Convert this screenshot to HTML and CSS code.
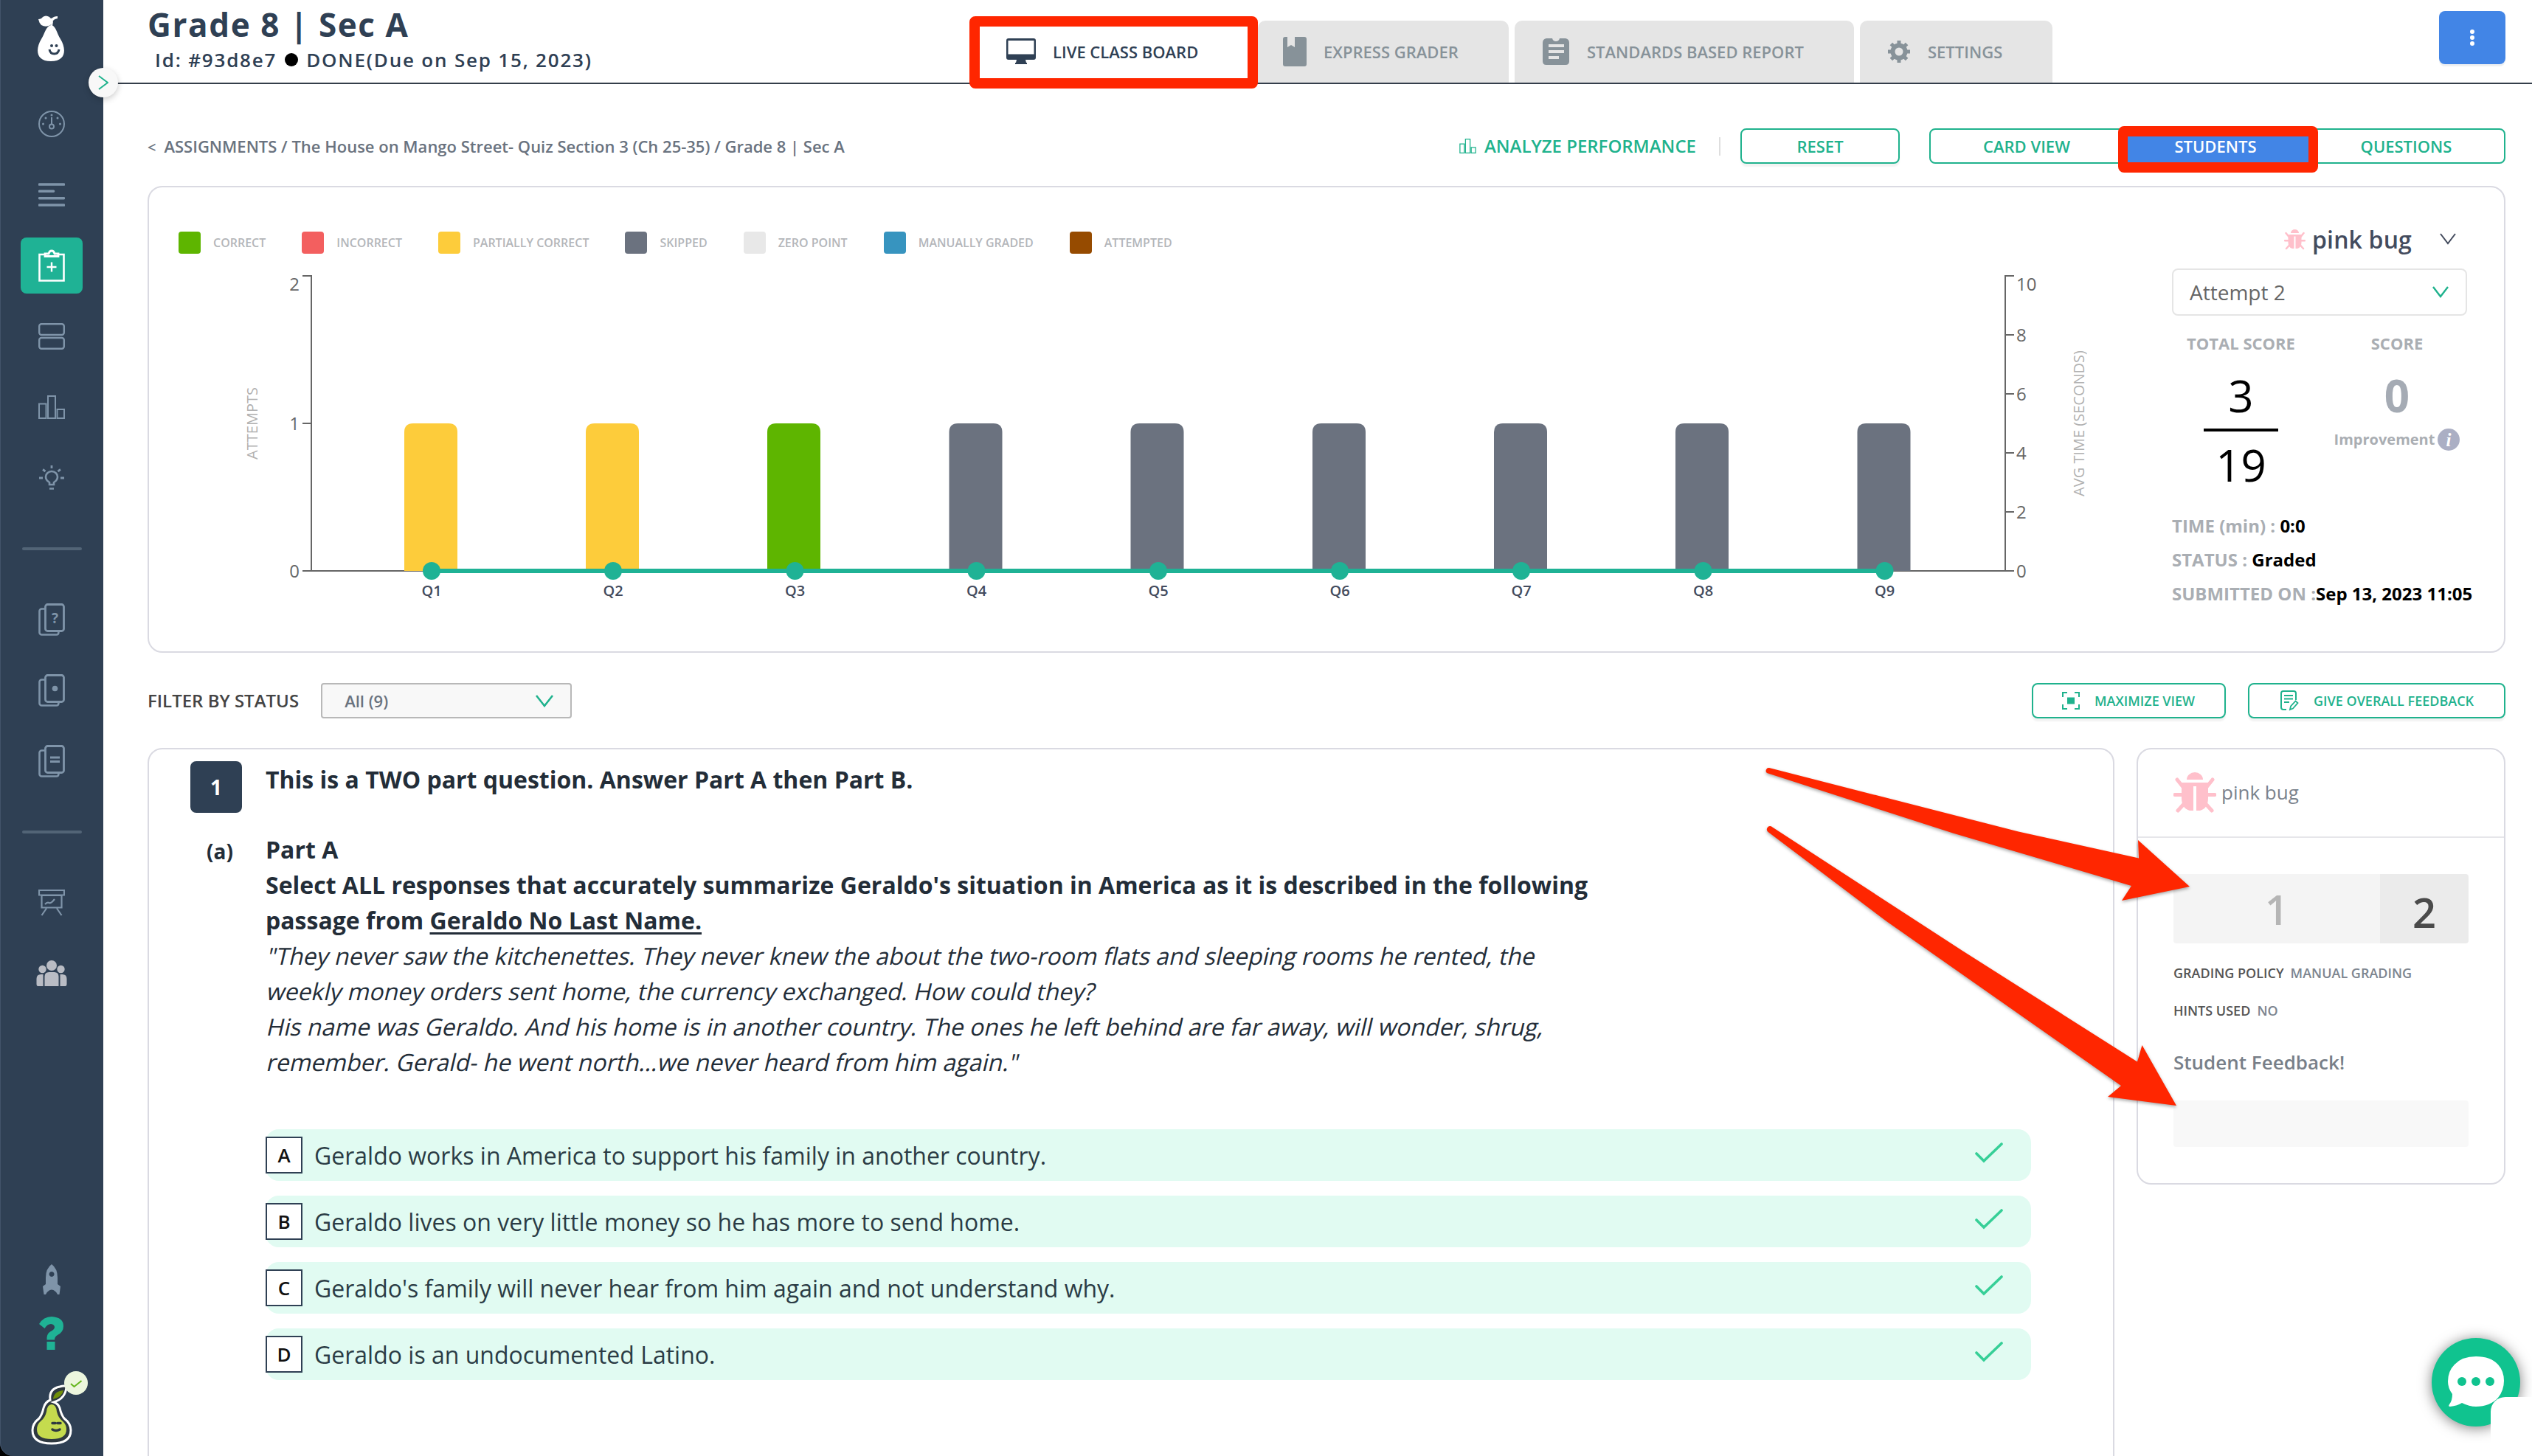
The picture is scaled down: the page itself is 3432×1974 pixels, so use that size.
FILE: index.html
```html
<!DOCTYPE html>
<html lang="en">
<head>
<meta charset="utf-8">
<title>Grade 8 | Sec A</title>
<link rel="stylesheet" href="styles.css">
</head>
<body>
<svg class="defs" width="0" height="0">
  <symbol id="bug" viewBox="0 0 58 56">
    <path d="M18 11a11 10 0 0 1 22 0z" fill="#ffc0cb"/>
    <path d="M11 15h36v21q0 14-11 17h-14q-11-3-11-17z" fill="#ffc0cb"/>
    <path d="M5 11l8 10M53 11l-8 10M2 31.500h12M44 31.500h12M6 53l9-10M52 53l-9-10" stroke="#ffc0cb" stroke-width="5" stroke-linecap="round"/>
    <path d="M29 20v33" stroke="#fff" stroke-width="4"/>
  </symbol>
  <symbol id="bars" viewBox="0 0 36 32">
    <path d="M1 11.500h9.500V31H1zM13 1h10v30H13zM25.500 19H35v12h-9.500z" fill="none" stroke="currentColor" stroke-width="2"/>
  </symbol>
  <symbol id="pages" viewBox="0 0 36 44">
    <path d="M9 7.500H4.500a3 3 0 0 0-3 3v29a3 3 0 0 0 3 3h20q3 0 3-4" fill="none" stroke="currentColor" stroke-width="2.600"/>
    <rect x="9.500" y="1.500" width="25" height="36" rx="3" fill="none" stroke="currentColor" stroke-width="2.800"/>
  </symbol>
</svg>

<aside class="sidebar">
  <div class="logo">
    <svg width="40" height="64" viewBox="0 0 40 64">
      <path d="M20 13C13 15 12 24 7 32-1 45-1 62 20 62s21-17 13-30C28 24 27 15 21 13z" fill="#fff"/>
      <path d="M3 5q4 0 6-3 4-3 9 0 1 2 3 2 3-3 8-3v3q-6 1-7 5-1 4-5 5-5 2-10-1Q4 10 3 5z" fill="#fff"/>
      <path d="M21 14l1-6" stroke="#fff" stroke-width="2"/>
      <circle cx="21" cy="41" r="2" fill="#2f4054"/><circle cx="27.500" cy="41" r="2" fill="#2f4054"/>
      <path d="M18 46q1 6 6.500 6t6.500-6" fill="none" stroke="#2f4054" stroke-width="3"/>
    </svg>
  </div>
  <nav class="nav">
    <a class="slot"><svg width="36" height="36" viewBox="0 0 36 36"><circle cx="18" cy="18" r="17" fill="none" stroke="currentColor" stroke-width="2"/><path d="M18 9v9" stroke="currentColor" stroke-width="2"/><circle cx="18" cy="21.500" r="3" fill="none" stroke="currentColor" stroke-width="2"/><g fill="currentColor"><circle cx="18" cy="6" r="1.500"/><circle cx="10" cy="10" r="1.500"/><circle cx="26" cy="10" r="1.500"/><circle cx="6.500" cy="18" r="1.500"/><circle cx="29.500" cy="18" r="1.500"/></g></svg></a>
    <a class="slot"><svg width="36" height="32" viewBox="0 0 36 32"><path d="M1.500 2h33M1.500 11.300h19M1.500 20.700h33M1.500 30h33" stroke="currentColor" stroke-width="3.600" stroke-linecap="round"/></svg></a>
    <a class="slot"><span class="tile"><svg width="36" height="44" viewBox="0 0 36 44"><path d="M8.500 7H1.500v35.500h33V7h-7" fill="none" stroke="#fff" stroke-width="2.600"/><path d="M9 9.500V6h5q1-4 4-4t4 4h5v3.500z" fill="none" stroke="#fff" stroke-width="2.800"/><path d="M18 17.500v13M11.500 24h13" stroke="#fff" stroke-width="2.400"/></svg></span></a>
    <a class="slot"><svg width="36" height="36" viewBox="0 0 36 36"><rect x="1.200" y="1.200" width="33.600" height="14.800" rx="3" fill="none" stroke="currentColor" stroke-width="2.400"/><rect x="1.200" y="20" width="33.600" height="14.800" rx="3" fill="none" stroke="currentColor" stroke-width="2.400"/></svg></a>
    <a class="slot"><svg width="36" height="32"><use href="#bars"/></svg></a>
    <a class="slot"><svg width="34" height="34" viewBox="0 0 34 34"><path d="M14 26v-3q-5-3-5-7.500a8 7.500 0 0 1 16 0q0 4.500-5 7.500v3zM14 31.500h6" fill="none" stroke="currentColor" stroke-width="2.600"/><path d="M17 0v4M5 5.500l3.500 2.500M29 5.500L25.500 8M0 17h5M29 17h5" stroke="currentColor" stroke-width="2.800"/></svg></a>
    <div class="slot"><i class="rule"></i></div>
    <a class="slot"><svg width="36" height="44" viewBox="0 0 36 44"><use href="#pages"/><text x="22.500" y="27" class="page-mark">?</text></svg></a>
    <a class="slot"><svg width="36" height="44" viewBox="0 0 36 44"><use href="#pages"/><circle cx="22.500" cy="19.500" r="3.800" fill="currentColor"/></svg></a>
    <a class="slot"><svg width="36" height="44" viewBox="0 0 36 44"><use href="#pages"/><path d="M16 17h13M16 22.500h13" stroke="currentColor" stroke-width="2.800"/></svg></a>
    <div class="slot"><i class="rule"></i></div>
    <a class="slot"><svg width="36" height="36" viewBox="0 0 36 36"><path d="M1 1h34v6.500H1zM4.500 8h27v16.500h-27zM11 25.500L4.500 35M25 25.500l6.500 9.500M9 20q3-3.500 5.500-2t7.500-5" fill="none" stroke="currentColor" stroke-width="2.200"/></svg></a>
    <a class="slot"><svg width="42" height="36" viewBox="0 0 42 36"><g fill="#b9bcc4"><circle cx="21" cy="7" r="7"/><circle cx="8.500" cy="12" r="5.200"/><circle cx="33.500" cy="12" r="5.200"/><path d="M11.500 35V22q0-6 6-6h7q6 0 6 6v13zM9.500 35H2.500Q.5 35 .5 32v-7q0-6 6-6h3zM32.500 35h7q2 0 2-3v-7q0-6-6-6h-3z"/></g></svg></a>
  </nav>
  <div class="sidebar-foot">
    <svg class="rocket" width="24" height="42" viewBox="0 0 24 42"><path fill-rule="evenodd" d="M12 0q8 6 8 18v9l4 3-1.500 11H20q-3-6-8-6.500Q7 35 4 41H1.500L0 30l4-3v-9Q4 6 12 0zm0 10a3.500 3.500 0 1 0 .1 0z" fill="#7f94a9"/></svg>
    <svg width="34" height="46" viewBox="0 0 34 46"><path d="M0 10Q6 0 17 0q16 1 16 13 0 8-8 12-4 2-4 6.500H10.500q-.5-8 4.500-11 6-3 6-6 0-4-5-4.500-5 0-8.500 6zM10.500 34H21.500v11H10.500z" fill="#1fb295"/></svg>
    <svg class="pear" width="76" height="102" viewBox="0 0 76 102">
      <path d="M40 39Q38 24 53 21q7-2 9 0-1 16-17 21 6 2 8 8 2 9 6 14 9 7 9 16 0 18-26 18T16 80q0-9 9-16 4-5 6-14 2-8 9-11z" fill="#2f3940" stroke="#fff" stroke-width="3"/>
      <path d="M42 45q6 0 7 10 2 8 7 12 6 5 6 12 0 13-20 13T22 79q0-7 6-12 5-4 7-12 1-10 7-10z" fill="#c5db4e"/>
      <path d="M44 38q1-11 14-12-2 9-14 12z" fill="#71900a"/>
      <path d="M43 70.500h4M50 70.500h4M43 79q5 3 10 0" stroke="#2f3940" stroke-width="3.500" fill="none" stroke-linecap="round"/>
      <circle cx="75" cy="16" r="16" fill="#ecf6de"/>
      <path d="M68 17l4.500 4 10-8" fill="none" stroke="#63b51a" stroke-width="2"/>
    </svg>
  </div>
  <button class="toggle"><svg width="14" height="20" viewBox="0 0 14 20"><path d="M1 1l12 9L1 19" fill="none" stroke="#1fb28d" stroke-width="2"/></svg></button>
</aside>

<main class="main">
  <header class="header">
    <div class="heading">
      <h1>Grade 8 | Sec A</h1>
      <p>Id: #93d8e7 <i class="dot"></i> DONE(Due on Sep 15, 2023)</p>
    </div>
    <div class="tabs">
      <a class="tab tab-live"><svg width="40" height="36" viewBox="0 0 40 36"><path fill-rule="evenodd" d="M3 0h34q3 0 3 3v23q0 3-3 3H26l1 4h1v2H12v-2h1l1-4H3q-3 0-3-3V3q0-3 3-3zM2.500 3v18.500h35V3z" fill="#2f4054"/></svg>LIVE CLASS BOARD</a>
      <a class="tab tab-express"><svg width="32" height="40" viewBox="0 0 32 40"><path d="M3 0h3v14l5-3 5 3V0h13q3 0 3 3v34q0 3-3 3H3q-3 0-3-3V3q0-3 3-3z" fill="#879299"/></svg>EXPRESS GRADER</a>
      <a class="tab tab-report"><svg width="36" height="36" viewBox="0 0 36 36"><path fill-rule="evenodd" d="M5 0h8q1 4 5 4t5-4h8q5 1 5 6v25q0 5-5 5H5q-5 0-5-5V6q0-5 5-6zM8 8v4h21V8zM8 16v4h21v-4zM8 24v4h14v-4z" fill="#879299"/></svg>STANDARDS BASED REPORT</a>
      <a class="tab tab-settings"><svg width="30" height="30" viewBox="0 0 30 30"><circle cx="15" cy="15" r="8.500" fill="none" stroke="#879299" stroke-width="6"/><path d="M15 0v5M15 25v5M0 15h5M25 15h5M4.400 4.400l3.500 3.500M22.100 22.100l3.500 3.500M4.400 25.600l3.500-3.500M22.100 7.900l3.500-3.500" stroke="#879299" stroke-width="5"/></svg>SETTINGS</a>
    </div>
    <button class="more"><svg width="8" height="24" viewBox="0 0 8 24"><g fill="#fff"><circle cx="4" cy="4" r="3"/><circle cx="4" cy="12" r="3"/><circle cx="4" cy="20" r="3"/></g></svg></button>
  </header>

  <div class="toolbar">
    <div class="crumbs"><span class="back">&lt;</span>ASSIGNMENTS / The House on Mango Street- Quiz Section 3 (Ch 25-35) / Grade 8 | Sec A</div>
    <a class="analyze"><svg width="23" height="20" preserveAspectRatio="none"><use href="#bars" width="23" height="20"/></svg>ANALYZE PERFORMANCE</a>
    <i class="vline"></i>
    <button class="btn reset">RESET</button>
    <div class="switch">
      <span class="seg seg-card">CARD VIEW</span><span class="seg seg-students">STUDENTS</span><span class="seg seg-questions">QUESTIONS</span>
    </div>
  </div>

  <section class="card overview">
    <div class="chart">
      <ul class="legend">
        <li><i class="sw green"></i>CORRECT</li>
        <li><i class="sw red"></i>INCORRECT</li>
        <li><i class="sw yellow"></i>PARTIALLY CORRECT</li>
        <li><i class="sw gray"></i>SKIPPED</li>
        <li><i class="sw light"></i>ZERO POINT</li>
        <li><i class="sw blue"></i>MANUALLY GRADED</li>
        <li><i class="sw brown"></i>ATTEMPTED</li>
      </ul>
      <svg class="plot" width="2598" height="500" viewBox="242 360 2598 500">
        <g class="axis">
          <path d="M410 374h12v400h-12M410 574h12M422 774H2718M2730 374h-12v400h12M2718 454h12M2718 534h12M2718 614h12M2718 694h12"/>
        </g>
        <g class="bars">
          <path fill="#fdcc3b" d="M548 774V586q0-12 12-12h48q12 0 12 12v188z"/>
          <path fill="#fdcc3b" d="M794 774V586q0-12 12-12h48q12 0 12 12v188z"/>
          <path fill="#5eb500" d="M1040 774V586q0-12 12-12h48q12 0 12 12v188z"/>
          <path fill="#6b727f" d="M1286.500 774V586q0-12 12-12h48q12 0 12 12v188z"/>
          <path fill="#6b727f" d="M1532.500 774V586q0-12 12-12h48q12 0 12 12v188z"/>
          <path fill="#6b727f" d="M1779 774V586q0-12 12-12h48q12 0 12 12v188z"/>
          <path fill="#6b727f" d="M2025 774V586q0-12 12-12h48q12 0 12 12v188z"/>
          <path fill="#6b727f" d="M2271 774V586q0-12 12-12h48q12 0 12 12v188z"/>
          <path fill="#6b727f" d="M2517.500 774V586q0-12 12-12h48q12 0 12 12v188z"/>
        </g>
        <path d="M585 774H2554" stroke="#1fb295" stroke-width="6"/>
        <g fill="#1fb295"><circle cx="585" cy="774" r="12"/><circle cx="831" cy="774" r="12"/><circle cx="1077.500" cy="774" r="12"/><circle cx="1323.500" cy="774" r="12"/><circle cx="1570" cy="774" r="12"/><circle cx="1816" cy="774" r="12"/><circle cx="2062" cy="774" r="12"/><circle cx="2308.500" cy="774" r="12"/><circle cx="2554.500" cy="774" r="12"/></g>
        <g class="tick end"><text x="406" y="394">2</text><text x="406" y="583">1</text><text x="406" y="783">0</text></g>
        <g class="tick"><text x="2733" y="394">10</text><text x="2733" y="463">8</text><text x="2733" y="543">6</text><text x="2733" y="623">4</text><text x="2733" y="703">2</text><text x="2733" y="783">0</text></g>
        <g class="qlabel"><text x="585" y="808">Q1</text><text x="831" y="808">Q2</text><text x="1077.500" y="808">Q3</text><text x="1323.500" y="808">Q4</text><text x="1570" y="808">Q5</text><text x="1816" y="808">Q6</text><text x="2062" y="808">Q7</text><text x="2308.500" y="808">Q8</text><text x="2554.500" y="808">Q9</text></g>
        <g class="axis-title"><text transform="translate(349 574) rotate(-90)">ATTEMPTS</text><text transform="translate(2825 574) rotate(-90)">AVG TIME (SECONDS)</text></g>
      </svg>
    </div>
    <div class="summary">
      <div class="student-pick"><svg width="29" height="29"><use href="#bug"/></svg><span>pink bug</span><svg class="pick-chev" width="22" height="16" viewBox="0 0 22 16"><path d="M1 1l10 13L21 1" fill="none" stroke="#434b5d" stroke-width="2"/></svg></div>
      <div class="attempt">Attempt 2<svg width="22" height="16" viewBox="0 0 22 16"><path d="M1 1l10 13L21 1" fill="none" stroke="#1fb28d" stroke-width="2.400"/></svg></div>
      <div class="scores">
        <div class="score-col"><span class="score-label">TOTAL SCORE</span><span class="num">3</span><i class="bar"></i><span class="num">19</span></div>
        <div class="score-col"><span class="score-label">SCORE</span><span class="num muted">0</span><span class="improve">Improvement<svg width="30" height="30" viewBox="0 0 30 30"><circle cx="15" cy="15" r="15" fill="#abafc4"/><text x="15" y="23.500" class="info-i">i</text></svg></span></div>
      </div>
      <p class="fact">TIME (min) : <b>0:0</b></p>
      <p class="fact">STATUS : <b>Graded</b></p>
      <p class="fact">SUBMITTED ON :<b>Sep 13, 2023 11:05</b></p>
    </div>
  </section>

  <div class="filters">
    <span class="filter-label">FILTER BY STATUS</span>
    <div class="filter-select">All (9)<svg width="24" height="17" viewBox="0 0 24 17"><path d="M1 1l11 14L23 1" fill="none" stroke="#1fb28d" stroke-width="2.600"/></svg></div>
    <button class="btn small maximize"><svg width="24" height="24" viewBox="0 0 24 24"><path d="M1 7V1h6M17 1h6v6M23 17v6h-6M7 23H1v-6" fill="none" stroke="#1fb28d" stroke-width="2"/><path d="M7 7.500h10v9H7z" fill="#1fb28d"/></svg>MAXIMIZE VIEW</button>
    <button class="btn small feedback-btn"><svg width="25" height="28" viewBox="0 0 25 28"><path d="M8 26H4q-3 0-3-3V4q0-3 3-3h14q3 0 3 3v9M5 7h12M5 11.500h12M5 16h7" fill="none" stroke="#1fb28d" stroke-width="2"/><path d="M13 26l1-4.500 6.500-7 3 2.500-6.500 7.500z" fill="none" stroke="#1fb28d" stroke-width="1.800"/></svg>GIVE OVERALL FEEDBACK</button>
  </div>

  <div class="work">
    <section class="card question">
      <div class="qrow"><span class="qnum">1</span><p class="qtext"><b>This is a TWO part question. Answer Part A then Part B.</b></p></div>
      <div class="qrow part"><span class="qpart">(a)</span>
        <div class="qtext">
          <b>Part A<br>Select ALL responses that accurately summarize Geraldo's situation in America as it is described in the following<br>passage from <u>Geraldo No Last Name.</u></b>
          <p class="slant">"They never saw the kitchenettes. They never knew the about the two-room flats and sleeping rooms he rented, the</p>
          <p class="slant">weekly money orders sent home, the currency exchanged. How could they?</p>
          <p class="slant">His name was Geraldo. And his home is in another country. The ones he left behind are far away, will wonder, shrug,</p>
          <p class="slant">remember. Gerald- he went north…we never heard from him again."</p>
        </div>
      </div>
      <ul class="options">
        <li><span class="key">A</span><span>Geraldo works in America to support his family in another country.</span><svg class="check" width="38" height="28" viewBox="0 0 38 28"><path d="M2 15l10 10L36 2" fill="none" stroke="#36cf97" stroke-width="3.600" stroke-linecap="round"/></svg></li>
        <li><span class="key">B</span><span>Geraldo lives on very little money so he has more to send home.</span><svg class="check" width="38" height="28" viewBox="0 0 38 28"><path d="M2 15l10 10L36 2" fill="none" stroke="#36cf97" stroke-width="3.600" stroke-linecap="round"/></svg></li>
        <li><span class="key">C</span><span>Geraldo's family will never hear from him again and not understand why.</span><svg class="check" width="38" height="28" viewBox="0 0 38 28"><path d="M2 15l10 10L36 2" fill="none" stroke="#36cf97" stroke-width="3.600" stroke-linecap="round"/></svg></li>
        <li><span class="key">D</span><span>Geraldo is an undocumented Latino.</span><svg class="check" width="38" height="28" viewBox="0 0 38 28"><path d="M2 15l10 10L36 2" fill="none" stroke="#36cf97" stroke-width="3.600" stroke-linecap="round"/></svg></li>
      </ul>
    </section>
    <section class="card grading">
      <div class="grading-head"><svg width="58" height="56"><use href="#bug"/></svg>pink bug</div>
      <div class="grading-body">
        <div class="points"><span class="got">1</span><span class="max">2</span></div>
        <p class="meta">GRADING POLICY<span>MANUAL GRADING</span></p>
        <p class="meta">HINTS USED<span>NO</span></p>
        <h2>Student Feedback!</h2>
        <div class="feedback-input"></div>
      </div>
    </section>
  </div>
</main>

<div class="mark mark-tab"></div>
<div class="mark mark-students"></div>
<svg class="arrows" width="3432" height="1974" viewBox="0 0 3432 1974">
  <path d="M2398 1041L2736 1127.500 2899 1163.500 2898 1139 2968 1202 2876 1221 2889 1201 2647 1129.500 2395 1048A4 4 0 0 1 2398 1041z"/>
  <path d="M2402.500 1121.500L2660 1289 2897 1439.500 2903.500 1417 2950 1499 2857 1487 2875 1472 2557 1249 2396 1127.500A4 4 0 0 1 2402.500 1121.500z"/>
</svg>
<div class="chat"><svg width="76" height="70" viewBox="0 0 76 70"><path d="M38 0q20 0 30 11 8 9 8 22t-8 23q-11 12-30 12-9 0-19-5-6 4-16 5-3 0-1-3 4-5 4-14Q0 43 0 34 0 20 9 11 19 0 38 0z" fill="#fff"/><g fill="#10c38f"><circle cx="19" cy="34" r="6"/><circle cx="38" cy="34" r="6"/><circle cx="57" cy="34" r="6"/></g></svg></div>
<div class="corner"></div>
</body>
</html>
```
FILE: styles.css
```css
* { box-sizing: border-box; margin: 0; padding: 0; }
html, body { width: 3432px; height: 1974px; overflow: hidden; }
body { position: relative; display: flex; background: #000; font-family: "Open Sans", sans-serif; font-size: 22px; color: #2f4054; }
svg { display: block; flex: none; }
ul { list-style: none; }
i { font-style: normal; }
b { font-weight: 700; }
button { font: inherit; background: none; border: 0; }
.defs { position: absolute; }

/* sidebar */
.sidebar { position: relative; flex: none; width: 140px; height: 1974px; display: flex; flex-direction: column; background: #2f4054; box-shadow: inset 1px 0 #43546a; border-bottom-left-radius: 18px; color: #7f94a9; }
.logo { height: 120px; padding: 21px 0 0 49px; }
.slot { height: 96px; display: flex; align-items: center; justify-content: center; }
.tile { width: 84px; height: 76px; display: flex; align-items: center; justify-content: center; border-radius: 8px; background: #1fb295; }
.rule { width: 81px; height: 4px; border-radius: 2px; background: #526476; }
.page-mark { font-size: 19px; font-weight: 700; text-anchor: middle; fill: currentColor; }
.sidebar-foot { margin-top: auto; height: 260px; display: flex; flex-direction: column; align-items: center; }
.sidebar-foot .rocket { margin-bottom: 29px; }
.pear { overflow: visible; margin-top: 28px; margin-right: 8px; }
.toggle { position: absolute; left: 120px; top: 92px; width: 40px; height: 40px; display: flex; align-items: center; justify-content: center; border-radius: 50%; background: #f8f8f8; box-shadow: 0 3px 8px rgba(0,0,0,.2); z-index: 2; }

/* main */
.main { flex: none; width: 3292px; display: flex; flex-direction: column; background: #fff; }
.header { flex: none; height: 114px; display: flex; align-items: flex-end; border-bottom: 2px solid #343e4a; padding: 0 36px 0 60px; }
.heading { width: 1113px; align-self: flex-start; color: #2f4054; letter-spacing: 1.6px; }
.heading h1 { font-size: 44px; font-weight: 700; line-height: 60px; margin-top: 3px; }
.heading p { display: flex; align-items: center; gap: 11px; padding-left: 10px; font-size: 26px; font-weight: 600; line-height: 36px; letter-spacing: 1.8px; }
.dot { width: 18px; height: 18px; border-radius: 50%; background: #000; }
.tabs { flex: 1; display: flex; gap: 8px; }
.tab { height: 84px; display: flex; align-items: center; border-radius: 10px 10px 0 0; background: #e5e5e5; color: #879299; font-weight: 600; line-height: 30px; }
.tab-live { width: 384px; padding-left: 51px; gap: 23px; background: #fff; color: #2f4054; }
.tab-express { width: 340px; padding-left: 34px; gap: 23px; }
.tab-report { width: 460px; padding-left: 38px; gap: 24px; }
.tab-settings { width: 261px; padding-left: 38px; gap: 24px; }
.more { align-self: flex-start; margin-top: 15px; width: 90px; height: 72px; border-radius: 8px; background: #4285e6; box-shadow: 0 3px 1px #eef0f2; display: flex; align-items: center; justify-content: center; }

.toolbar { flex: none; height: 138px; padding: 60px 36px 30px 60px; display: flex; align-items: center; font-weight: 600; line-height: 30px; }
.crumbs { flex: 1; padding-top: 2px; color: #6a737f; }
.back { margin-right: 11px; font-size: 20px; }
.analyze { display: flex; align-items: center; gap: 11px; font-size: 24px; color: #1fb28d; }
.vline { width: 2px; height: 25px; margin: 0 27px 0 31px; background: #dedede; }
.btn { height: 48px; display: flex; align-items: center; justify-content: center; border: 2px solid #1fb28d; border-radius: 8px; color: #1fb28d; font-weight: 600; box-shadow: 0 4px 2px #f3f3f3; }
.reset { width: 216px; margin-right: 40px; }
.switch { width: 781px; height: 48px; display: flex; border: 2px solid #1fb28d; border-radius: 8px; overflow: hidden; color: #1fb28d; }
.seg { display: flex; align-items: center; justify-content: center; }
.seg-card { width: 260px; }
.seg-students { width: 252px; background: #4285e6; color: #fff; }
.seg-questions { flex: 1; }

.card { border: 2px solid #dadae2; border-radius: 20px; background: #fff; }
.overview { flex: none; height: 633px; margin: 0 36px 0 60px; display: flex; justify-content: space-between; padding-left: 40px; }
.chart { padding-top: 60px; }
.legend { display: flex; gap: 49px; font-size: 16px; font-weight: 600; line-height: 30px; color: #b4b6ba; white-space: nowrap; }
.legend li { display: flex; gap: 17px; }
.sw { width: 30px; height: 30px; border-radius: 4px; }
.green { background: #5eb500; } .red { background: #f35f5f; } .yellow { background: #fdcc3b; } .gray { background: #6b727f; }
.light { background: #e8e8e8; } .blue { background: #3794bf; } .brown { background: #964b00; }
.plot { margin-top: 16px; }
.axis path { fill: none; stroke: #666; stroke-width: 2; }
.tick { font-size: 24px; fill: #666; }
.end { text-anchor: end; }
.qlabel { font-size: 20px; font-weight: 600; fill: #434b5d; text-anchor: middle; }
.axis-title { font-size: 20px; fill: #b1b1b1; text-anchor: middle; }

.summary { width: 450px; padding-top: 40px; }
.student-pick { height: 60px; display: flex; align-items: center; padding-left: 152px; font-size: 32px; font-weight: 600; color: #434b5d; }
.student-pick span { margin: 0 38px 0 9px; letter-spacing: .15px; }
.attempt { width: 400px; height: 64px; margin-top: 10px; padding: 0 23px 0 22px; display: flex; align-items: center; justify-content: space-between; border: 2px solid #e5e5e5; border-radius: 8px; font-size: 28px; color: #666; }
.scores { display: grid; grid-template-columns: 187px 236px; margin-top: 18px; }
.score-col { display: flex; flex-direction: column; align-items: center; }
.score-label { font-size: 22px; font-weight: 700; line-height: 38px; color: #aaaeb3; }
.num { font-size: 60px; line-height: 76px; margin-top: 14px; color: #000; }
.bar { width: 101px; height: 4px; margin-top: 7px; background: #000; }
.bar + .num { margin-top: 7px; }
.num.muted { font-weight: 700; color: #a5abb4; }
.improve { margin-top: 7px; display: flex; align-items: center; gap: 4px; font-size: 20px; font-weight: 700; line-height: 30px; color: #aaaeb3; }
.info-i { font: italic 700 25px "Liberation Serif", serif; fill: #fff; text-anchor: middle; }
.fact { font-size: 24px; font-weight: 700; line-height: 46px; color: #aaaeb3; white-space: nowrap; }
.scores + .fact { margin-top: 22px; }
.fact b { color: #000; }

.filters { flex: none; height: 48px; margin: 41px 36px 40px 60px; display: flex; align-items: center; line-height: 30px; }
.filter-label { font-size: 24px; font-weight: 600; color: #444; }
.filter-select { width: 340px; height: 48px; margin: 0 auto 0 30px; padding: 0 23px 0 30px; display: flex; align-items: center; justify-content: space-between; border: 2px solid #b8b8b8; border-radius: 4px; background: #f8f8f8; font-weight: 600; color: #6a737f; }
.small { font-size: 18px; gap: 20px; justify-content: flex-start; }
.maximize { width: 263px; padding-left: 39px; margin-right: 30px; }
.feedback-btn { width: 349px; padding-left: 42px; }

.work { flex: none; height: 1000px; margin: 0 36px 0 60px; display: flex; align-items: flex-start; justify-content: space-between; }
.question { width: 2666px; height: 1000px; padding: 16px 0 0 56px; }
.qrow { display: flex; font-size: 32px; line-height: 48px; color: #232d38; }
.qrow.part { margin-top: 25px; }
.qnum { width: 70px; height: 70px; margin-right: 32px; border-radius: 8px; background: #2f4054; color: #fff; font-size: 28px; font-weight: 700; line-height: 70px; text-align: center; }
.qpart { width: 80px; margin-right: 22px; padding-left: 22px; padding-top: 3px; font-size: 28px; font-weight: 700; }
.qtext { white-space: nowrap; padding-top: 1px; }
.qtext u { text-decoration-thickness: 3px; text-underline-offset: 4px; text-decoration-skip-ink: none; }
/* obliqued roman: keeps the upright letterforms */
.slant { transform: skewX(-13deg); transform-origin: 0 76%; }
.options { width: 2393px; margin: 67px 0 0 102px; display: flex; flex-direction: column; gap: 20px; }
.options li { height: 70px; display: flex; align-items: center; border-radius: 18px; background: #e1fbf2; font-size: 32px; color: #2b3c45; }
.key { width: 50px; height: 50px; margin-right: 16px; border: 2px solid #2f4054; background: #fff; font-size: 26px; font-weight: 600; line-height: 46px; text-align: center; color: #111; }
.check { margin: 0 38px 6px auto; }

.grading { width: 500px; height: 592px; }
.grading-head { height: 120px; padding: 0 0 2px 48px; display: flex; align-items: center; gap: 7px; border-bottom: 2px solid #e6e6ea; font-size: 26px; color: #7a828c; }
.grading-body { padding: 49px 48px 0; }
.points { height: 94px; display: flex; border-radius: 4px; overflow: hidden; font-size: 56px; font-weight: 600; text-align: center; }
.got { width: 280px; background: #f4f4f4; color: #b5b5b5; line-height: 94px; }
.max { flex: 1; background: #ebebeb; color: #4a4a4a; line-height: 102px; }
.meta { font-size: 18px; font-weight: 600; line-height: 51px; color: #555; }
.points + .meta { margin-top: 15px; }
.meta span { margin-left: 9px; color: #7d858f; }
.grading h2 { margin-top: 24px; font-size: 26px; font-weight: 600; line-height: 40px; color: #787f89; }
.feedback-input { height: 63px; margin-top: 32px; border-radius: 4px; background: #f8f8f8; }

/* annotations and floating widgets */
.mark { position: absolute; border-style: solid; border-color: #ff2600; border-radius: 8px; }
.mark-tab { left: 1314px; top: 22px; width: 391px; height: 98px; border-width: 14px; }
.mark-students { left: 2871px; top: 171px; width: 271px; height: 63px; border-width: 14px 13px; }
.arrows { position: absolute; left: 0; top: 0; fill: #ff2600; filter: drop-shadow(0 2px 2px rgba(0,0,0,.35)); pointer-events: none; }
.chat { position: absolute; left: 3296px; top: 1814px; width: 120px; height: 120px; display: flex; align-items: center; justify-content: center; border-radius: 50%; background: #10c38f; box-shadow: 0 2px 18px rgba(0,0,0,.5); }
.corner { position: absolute; left: 3376px; top: 1894px; width: 56px; height: 80px; border-top-left-radius: 20px; background: #fff; }
```
